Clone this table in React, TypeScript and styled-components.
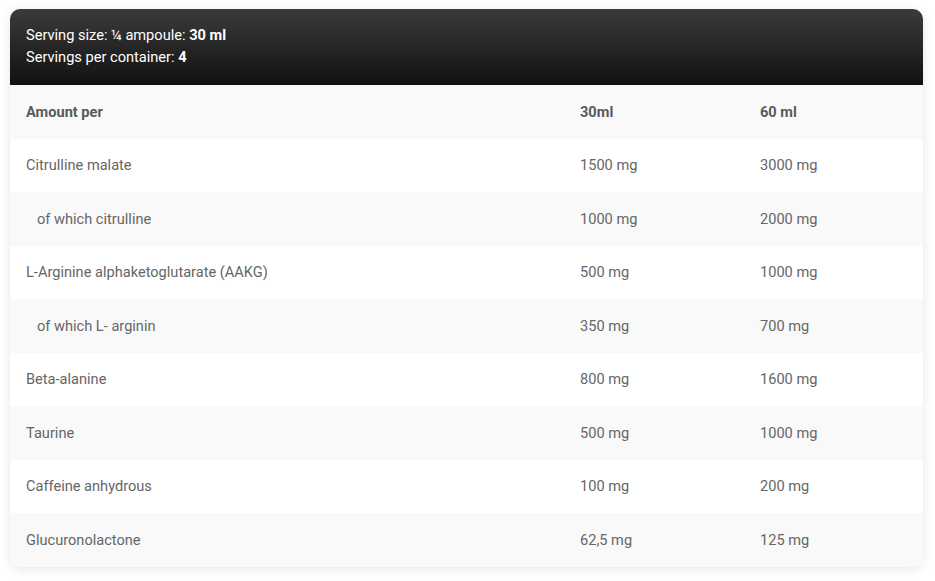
import React from "react";
import styled, { createGlobalStyle } from "styled-components";

const Global = createGlobalStyle`
  html, body { margin: 0; padding: 0; background: #ffffff; }
  body { font-family: Roboto, "Liberation Sans", Arial, sans-serif; }
`;

const Page = styled.div`
  padding: 9px 12px 15px 10px;
`;

const Card = styled.div`
  width: 913px;
  border-radius: 10px;
  overflow: hidden;
  box-shadow: 0 2px 12px rgba(0, 0, 0, 0.1);
  background: #fff;
`;

const Header = styled.div`
  background: linear-gradient(to bottom, #3b3b3b 0%, #111111 100%);
  color: #fff;
  padding: 15px 16px 17px;
  font-size: 14.6px;
  line-height: 22px;
  height: 44px;
`;

const Line = styled.div``;

const Table = styled.div`
  display: grid;
  grid-template-columns: 554px 180px 1fr;
`;

const Row = styled.div<{ $shade: boolean }>`
  display: contents;
  & > div {
    background: ${(p) => (p.$shade ? "#f9f9f9" : "#ffffff")};
  }
`;

const Cell = styled.div<{ $bold?: boolean; $indent?: boolean }>`
  height: 53.5px;
  display: flex;
  align-items: center;
  padding-left: ${(p) => (p.$indent ? "27px" : "16px")};
  font-size: 14.6px;
  font-weight: ${(p) => (p.$bold ? 700 : 400)};
  color: ${(p) => (p.$bold ? "#5a5a5a" : "#666666")};
`;

const rows: [string, string, string, boolean][] = [
  ["Citrulline malate", "1500 mg", "3000 mg", false],
  ["of which citrulline", "1000 mg", "2000 mg", true],
  ["L-Arginine alphaketoglutarate (AAKG)", "500 mg", "1000 mg", false],
  ["of which L- arginin", "350 mg", "700 mg", true],
  ["Beta-alanine", "800 mg", "1600 mg", false],
  ["Taurine", "500 mg", "1000 mg", false],
  ["Caffeine anhydrous", "100 mg", "200 mg", false],
  ["Glucuronolactone", "62,5 mg", "125 mg", false],
];

export default function App() {
  return (
    <>
      <Global />
      <Page>
        <Card>
          <Header>
            <Line>
              Serving size: ¼ ampoule: <b>30 ml</b>
            </Line>
            <Line>
              Servings per container: <b>4</b>
            </Line>
          </Header>
          <Table>
            <Row $shade>
              <Cell $bold>Amount per</Cell>
              <Cell $bold>30ml</Cell>
              <Cell $bold>60 ml</Cell>
            </Row>
            {rows.map(([name, a, b, indent], i) => (
              <Row key={name} $shade={i % 2 === 1}>
                <Cell $indent={indent}>{name}</Cell>
                <Cell>{a}</Cell>
                <Cell>{b}</Cell>
              </Row>
            ))}
          </Table>
        </Card>
      </Page>
    </>
  );
}
